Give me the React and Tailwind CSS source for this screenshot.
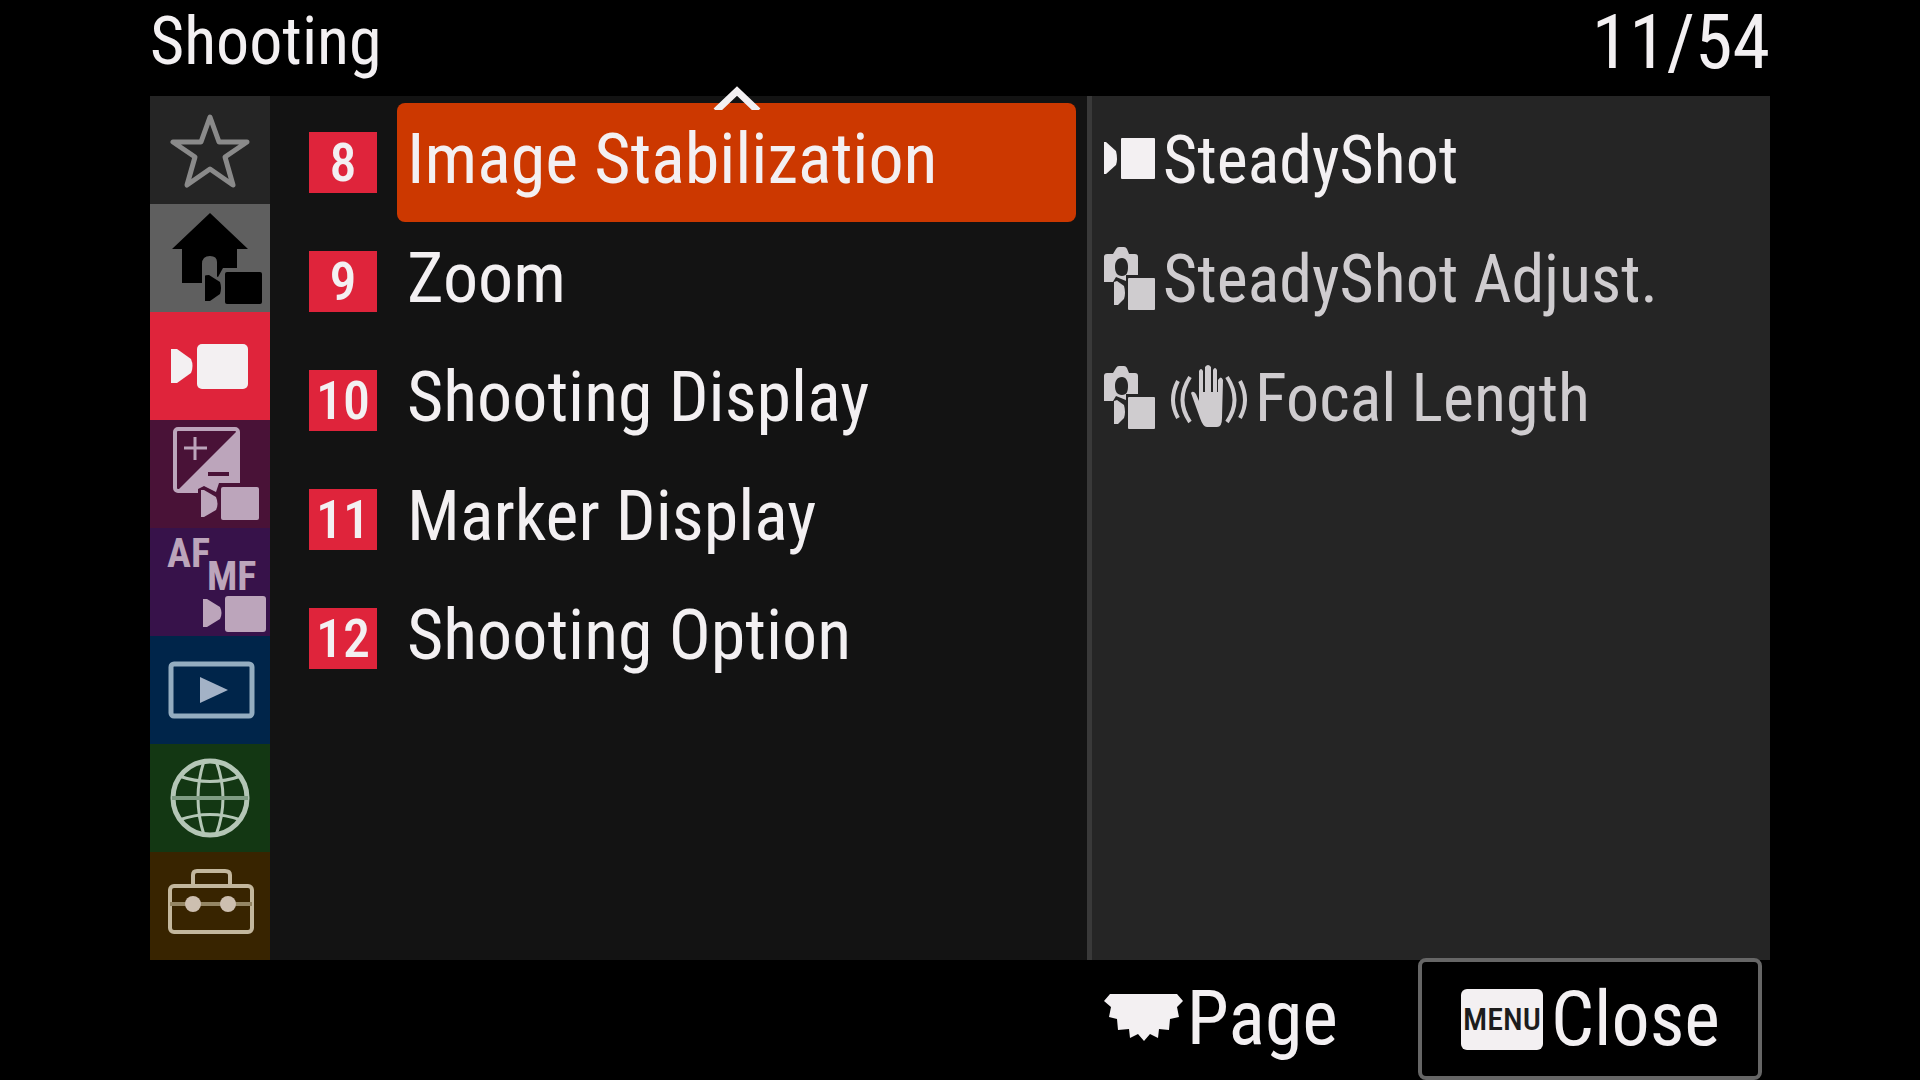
const tabs = [
  { id: 'my', label: 'My Menu', bg: 'bg-[#252525]', Icon: StarIcon },
  { id: 'main', label: 'Main', bg: 'bg-[#5f5f5f]', Icon: HomeIcon },
  { id: 'shooting', label: 'Shooting', bg: 'bg-[#df243b]', Icon: ShootingIcon },
  { id: 'exposure', label: 'Exposure/Color', bg: 'bg-[#491237]', Icon: ExposureIcon },
  { id: 'focus', label: 'Focus', bg: 'bg-[#37124a]', Icon: FocusIcon },
  { id: 'playback', label: 'Playback', bg: 'bg-[#00254a]', Icon: PlaybackIcon },
  { id: 'network', label: 'Network', bg: 'bg-[#133713]', Icon: NetworkIcon },
  { id: 'setup', label: 'Setup', bg: 'bg-[#382400]', Icon: SetupIcon },
];

const groups = [
  { no: 8, label: 'Image Stabilization' },
  { no: 9, label: 'Zoom' },
  { no: 10, label: 'Shooting Display' },
  { no: 11, label: 'Marker Display' },
  { no: 12, label: 'Shooting Option' },
];

const items = [
  { label: 'SteadyShot', icons: [MovieIcon], enabled: true },
  { label: 'SteadyShot Adjust.', icons: [StillMovieIcon], enabled: false },
  { label: 'Focal Length', icons: [StillMovieIcon, HandIcon], enabled: false },
];

function StarIcon() {
  return (
    <svg viewBox="0 0 120 108" className="h-full w-full" fill="none" stroke="#8a8a8a" strokeWidth="5" strokeLinejoin="round">
      <path d="M60 21 L69 46 H97 L75 61 L83 89 L60 73 L37 89 L45 61 L23 46 H51 Z" />
    </svg>
  );
}

function HomeIcon() {
  return (
    <svg viewBox="0 0 120 108" className="h-full w-full">
      <path d="M60 9 L98 45 H87 V79 H67 V58 Q67 52 60 52 Q52 52 52 60 V79 H32 V45 H22 Z" />
      <path d="M55 70 L58 68 L68 73 L73 64 H114 V102 H52 V79 H55 Z" fill="#5f5f5f" />
      <path d="M55 72 Q55 71 59 71 L70 78 Q72 84 70 90 L60 97 H55 Z" />
      <rect x="75" y="68" width="37" height="32" rx="2" />
    </svg>
  );
}

function ShootingIcon() {
  return (
    <svg viewBox="0 0 120 108" className="h-full w-full" fill="#f3f0f2">
      <path d="M21 37 L27 37 L41 47 Q44 54 41 61 L27 71 H21 Z" />
      <rect x="47" y="32" width="51" height="45" rx="5" />
    </svg>
  );
}

function ExposureIcon() {
  return (
    <svg viewBox="0 0 120 108" className="h-full w-full" fill="#bca5bb">
      <rect x="25" y="9" width="63" height="62" rx="3" fill="none" stroke="#bca5bb" strokeWidth="4" />
      <path d="M88 10 V71 H27 Z" />
      <path d="M34 28 H57 M45 17 V40" stroke="#bca5bb" strokeWidth="3" />
      <path d="M58 54 H79" stroke="#491237" strokeWidth="4" />
      <path d="M48 75 V69 L54 66 L66 72 L69 63 H112 V104 H48 Z" fill="#491237" />
      <path d="M51 70 H54 L66 77 Q69 84 66 90 L54 97 H51 Z" />
      <rect x="71" y="67" width="38" height="33" rx="2" />
    </svg>
  );
}

function FocusIcon() {
  return (
    <svg viewBox="0 0 120 108" className="h-full w-full font-['Roboto_Condensed','Roboto',sans-serif] text-[40px] font-bold" fill="#bca5bb">
      <text x="17" y="39">AF</text>
      <text x="57" y="62">MF</text>
      <path d="M53 71 H57 L70 79 Q73 85 70 91 L57 99 H53 Z" />
      <rect x="75" y="68" width="41" height="36" rx="3" />
    </svg>
  );
}

function PlaybackIcon() {
  return (
    <svg viewBox="0 0 120 108" className="h-full w-full" fill="#a3b2c6">
      <rect x="21" y="28" width="81" height="52" rx="3" fill="none" stroke="#94adc0" strokeWidth="5" />
      <path d="M50 41 L78 54 L50 67 Z" />
    </svg>
  );
}

function NetworkIcon() {
  return (
    <svg viewBox="0 0 120 108" className="h-full w-full" fill="none" stroke="#b4c6b6" strokeWidth="3">
      <circle cx="60" cy="54" r="37" strokeWidth="5" />
      <path d="M54 17 Q42 54 54 91 M66 17 Q80 54 66 91" />
      <path d="M22 54 H98" stroke="#7f9c83" strokeWidth="4" />
      <path d="M29 32 Q60 43 91 32 M29 76 Q60 65 91 76" strokeWidth="3" />
    </svg>
  );
}

function SetupIcon() {
  return (
    <svg viewBox="0 0 120 108" className="h-full w-full" fill="none" stroke="#c3b79d" strokeWidth="4">
      <rect x="20" y="34" width="82" height="46" rx="4" />
      <path d="M43 33 V23 Q43 19 47 19 H75 Q80 19 80 23 V33" />
      <path d="M20 52 H102" stroke="#948664" />
      <circle cx="43" cy="52" r="8" fill="#cdbfb0" stroke="none" />
      <circle cx="78" cy="52" r="8" fill="#cdbfb0" stroke="none" />
    </svg>
  );
}

function MovieIcon() {
  return (
    <svg viewBox="0 -5 51 64" className="h-16 w-[51px] shrink-0" fill="currentColor">
      <path d="M0 8 H2 L12 17 Q14 25 12 31 L2 40 H0 Z" />
      <rect x="17" y="4" width="34" height="41" rx="1" />
    </svg>
  );
}

function StillMovieIcon() {
  return (
    <svg viewBox="0 -5 51 64" className="h-16 w-[51px] shrink-0 overflow-visible" fill="currentColor">
      <path
        fillRule="evenodd"
        d="M0 4 Q0 1 3 1 H9 L12 -4 Q13 -6 15 -6 H20 Q22 -6 23 -4 L25 1 H31 Q34 1 34 4 V22 H22 V28 L12 24 L9 29 H0 Z M18 5 C13 5 11 9 11 14 S13 23 18 23 S24 19 24 14 S22 5 18 5 Z"
      />
      <path d="M10 29 L13 28 L20 33 Q22 40 20 46 L14 52 H10 Z" />
      <rect x="24" y="25" width="27" height="32" rx="1" />
    </svg>
  );
}

function HandIcon() {
  return (
    <svg viewBox="0 -5 76 64" className="ml-4 h-16 w-[76px] shrink-0 overflow-visible" fill="none" stroke="currentColor" strokeWidth="4">
      <path d="M7 9 Q-3 28 7 46 M19 5 Q4 28 19 50 M56 5 Q71 28 56 50 M69 9 Q79 28 69 46" />
      <path
        d="M20 21 Q22 18 25 22 L28 29 V-1 Q30 -5 32 -1 V20 H34 V-5 Q37 -9 40 -5 V20 H42 V-2 Q44 -6 46 -2 V20 H47 V8 Q50 3 52 8 L51 46 Q51 55 46 55 H36 Q32 55 29 46 Z"
        fill="currentColor"
        stroke="none"
      />
    </svg>
  );
}

function DialIcon() {
  return (
    <svg viewBox="0 0 79 48" className="h-12 w-[79px]" fill="currentColor">
      <path d="M6 0 H73 L79 7 L73 13 L75 23 L66 25 L65 36 L55 35 L54 44 L46 40 L40 47 L34 40 L26 44 L25 35 L14 36 L13 25 L5 23 L7 13 L0 7 Z" />
    </svg>
  );
}

export default function App() {
  return (
    <div className="flex min-h-screen flex-col bg-black px-[150px] font-['Roboto_Condensed','Roboto',sans-serif] text-[#f3f0f2]">
      <header className="flex h-24 items-center justify-between pb-3 leading-none">
        <h1 className="text-[66px]">Shooting</h1>
        <span className="text-[76px]">11/54</span>
      </header>

      <main className="flex flex-1">
        <nav className="grid w-[120px] shrink-0 grid-rows-8">
          {tabs.map(({ id, label, bg, Icon }) => (
            <button key={id} aria-label={label} className={`h-[108px] ${bg}`}>
              <Icon />
            </button>
          ))}
        </nav>

        <section className="relative flex-[806] bg-[#131313] pt-[7px] pr-[11px]">
          <svg viewBox="0 0 48 24" className="absolute -top-[10px] left-[443px] h-6 w-12" fill="none" stroke="#f3f0f2" strokeWidth="7">
            <path d="M3 25 L24 5 L45 25" />
          </svg>
          <ul>
            {groups.map((group, i) => (
              <li key={group.no} className="flex h-[119px] items-center gap-5 pl-[39px]">
                <span className="flex h-[61px] w-[68px] shrink-0 items-center justify-center bg-[#df243b] text-[54px] leading-none font-medium">
                  {group.no}
                </span>
                <button className={`h-full flex-1 rounded-lg pb-2 pl-2.5 text-left text-[70px] leading-none ${i === 0 ? 'bg-[#cc3800]' : ''}`}>
                  {group.label}
                </button>
              </li>
            ))}
          </ul>
        </section>

        <section className="flex-[666] border-l-[5px] border-[#393939] bg-[#252525] pt-[7px] pl-3">
          <ul>
            {items.map((item) => (
              <li key={item.label}>
                <button disabled={!item.enabled} className="flex h-[119px] items-center pb-1 text-left text-[66px] leading-none text-[#f3f0f2] disabled:text-[#cfcccf]">
                  {item.icons.map((Icon, i) => (
                    <Icon key={i} />
                  ))}
                  <span className="ml-2">{item.label}</span>
                </button>
              </li>
            ))}
          </ul>
        </section>
      </main>

      <footer className="flex h-[120px] items-end justify-end gap-20 pr-2 text-[76px] leading-none">
        <button className="flex h-full items-center gap-1 pb-1">
          <DialIcon />
          Page
        </button>
        <button className="flex h-[122px] w-[344px] items-center gap-2 rounded-lg border-4 border-[#666] bg-black pl-[39px]">
          <span className="flex h-[61px] w-[82px] items-center justify-center rounded-md bg-[#f3f0f2] text-[32px] font-medium text-[#1c1c1c]">MENU</span>
          Close
        </button>
      </footer>
    </div>
  );
}
